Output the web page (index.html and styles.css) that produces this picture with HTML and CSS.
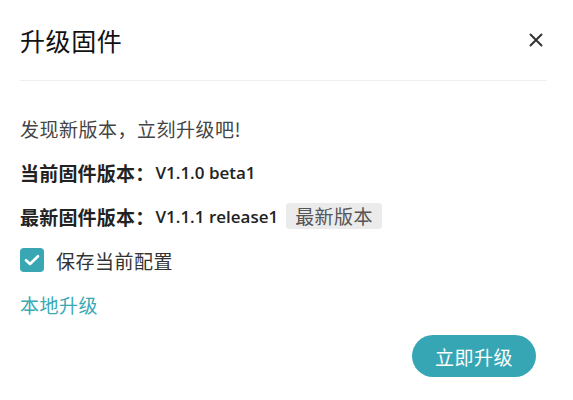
FILE: index.html
```html
<!DOCTYPE html>
<html lang="zh-CN">
<head>
<meta charset="utf-8">
<title>升级固件</title>
<link rel="stylesheet" href="styles.css">
</head>
<body>
<div class="dialog">
  <div class="header">
    <h1 class="title">升级固件</h1>
    <button class="close" aria-label="关闭">
      <svg width="14" height="14" viewBox="0 0 14 14"><path d="M1.5 1.5 L12.5 12.5 M12.5 1.5 L1.5 12.5" stroke="#333" stroke-width="2" stroke-linecap="round"/></svg>
    </button>
  </div>
  <div class="content">
    <p class="row notice">发现新版本，立刻升级吧!</p>
    <p class="row strong">当前固件版本：<span class="ver">V1.1.0 beta1</span></p>
    <p class="row strong">最新固件版本：<span class="ver">V1.1.1 release1</span><span class="tag">最新版本</span></p>
    <label class="row check">
      <span class="box"><svg width="16" height="12" viewBox="0 0 16 12"><path d="M2 6.2 L6 10 L14 2.2" fill="none" stroke="#fff" stroke-width="2.6" stroke-linecap="round" stroke-linejoin="round"/></svg></span>
      <span class="check-label">保存当前配置</span>
    </label>
    <a class="row link" href="#">本地升级</a>
  </div>
  <div class="footer">
    <button class="primary">立即升级</button>
  </div>
</div>
</body>
</html>
```

FILE: styles.css
```css
html, body {
  margin: 0;
  padding: 0;
  background: #fff;
}
body {
  font-family: "Noto Sans CJK SC", sans-serif;
  color: #333;
}
.dialog {
  width: 573px;
  height: 400px;
  box-sizing: border-box;
  padding: 0 26px 0 20px;
}
.header {
  height: 80px;
  display: flex;
  align-items: center;
  justify-content: space-between;
  border-bottom: 1px solid #efefef;
}
.title {
  margin: 0;
  font-size: 25px;
  font-weight: 400;
  color: #111;
  letter-spacing: 0.6px;
}
.close {
  border: 0;
  background: none;
  padding: 0;
  margin-right: 4px;
  width: 14px;
  height: 14px;
  display: flex;
  align-items: center;
  justify-content: center;
}
.content {
  padding-top: 25px;
  display: flex;
  flex-direction: column;
  align-items: flex-start;
}
.row {
  margin: 0;
  height: 44px;
  display: flex;
  align-items: center;
  font-size: 19px;
  letter-spacing: 0.5px;
}
.notice {
  color: #444;
}
.strong {
  font-weight: 600;
  color: #222;
  letter-spacing: 0.2px;
}
.ver {
  font-family: "Open Sans", sans-serif;
  font-size: 17px;
  font-weight: 600;
  letter-spacing: 0;
  margin-left: 1px;
}
.tag {
  display: inline-block;
  margin-left: 8px;
  background: #ebebeb;
  color: #555;
  font-weight: 400;
  letter-spacing: 0.4px;
  border-radius: 3px;
  padding: 0 9px;
  height: 26px;
  line-height: 26px;
}
.check {
  gap: 12px;
}
.box {
  width: 24px;
  height: 24px;
  border-radius: 4px;
  background: #38a6b3;
  display: flex;
  align-items: center;
  justify-content: center;
}
.check-label {
  color: #333;
}
.link {
  color: #3aa8b5;
  text-decoration: none;
}
.footer {
  display: flex;
  justify-content: flex-end;
  padding-right: 11px;
  margin-top: 9px;
}
.primary {
  width: 124px;
  height: 42px;
  border: 0;
  border-radius: 21px;
  background: #37a6b4;
  color: #fff;
  font-family: "Noto Sans CJK SC", sans-serif;
  font-size: 19px;
  letter-spacing: 0.5px;
  font-weight: 400;
}
```
